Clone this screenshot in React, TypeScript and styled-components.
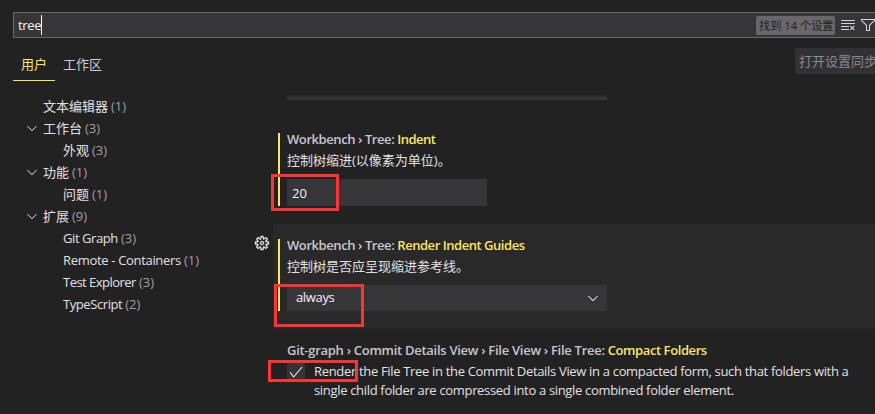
import React from 'react';
import styled, { createGlobalStyle } from 'styled-components';
import { VscCheck, VscChevronDown, VscClearAll, VscFilter, VscGear } from 'react-icons/vsc';

const accent = '#fce566';
const field = '#363537';
const fg = '#e2e0e4';

const GlobalStyle = createGlobalStyle`
  * { box-sizing: border-box; }
  html, body { margin: 0; background: #222222; overflow: hidden; }
  body {
    color: ${fg};
    font: 13px/22px "Open Sans", "Noto Sans CJK SC", sans-serif;
    white-space: nowrap;
  }
`;

const Editor = styled.main`
  width: 875px;
  height: 414px;
  padding: 12px 0 0 13px;
  overflow: hidden;
  background: #222222;
`;

const Text = styled.span<{ $track?: number }>`
  letter-spacing: ${(p) => p.$track ?? 0}px;
`;

const SearchBar = styled.div`
  display: flex;
  align-items: center;
  height: 26px;
  padding-left: 4px;
  background: ${field};
  border: 1px solid #69676c;
  border-right: 0;
  color: #f7f1ff;
`;

const Query = styled.div`
  flex: 1;
  display: flex;
  align-items: center;
`;

const Caret = styled.i`
  width: 1px;
  height: 20px;
  background: #ffffff;
`;

const ResultCount = styled.div`
  width: 79px;
  height: 19px;
  padding-left: 3px;
  border-radius: 2px;
  background: #69676c;
  color: #222222;
  font-size: 11.2px;
  line-height: 20px;
`;

const SearchActions = styled.div`
  display: flex;
  gap: 4px;
  width: 40px;
  padding-left: 5px;
  color: #d8d5dc;
`;

const SearchIcon = styled.span`
  display: flex;
  flex: none;
  width: 16px;
  font-size: 16px;
`;

const Header = styled.div`
  display: flex;
  justify-content: space-between;
  align-items: flex-start;
  height: 57px;
`;

const Tabs = styled.nav`
  display: flex;
  padding-top: 10px;
`;

const Tab = styled.div<{ $active?: boolean }>`
  height: 33px;
  padding: 5px 8px 0;
  color: ${(p) => (p.$active ? accent : '#cfccd4')};
  border-bottom: 1px solid ${(p) => (p.$active ? accent : 'transparent')};
`;

const SyncButton = styled.button`
  width: 80px;
  height: 26px;
  margin-top: 10px;
  padding: 0 0 0 4px;
  overflow: hidden;
  border: 0;
  border-radius: 2px 0 0 2px;
  background: #323134;
  color: #8b888f;
  font: inherit;
  text-align: left;
`;

const Columns = styled.div`
  display: flex;
`;

const Toc = styled.ul`
  flex: none;
  width: 235px;
  margin: 0;
  padding: 0;
  list-style: none;
`;

const TocRow = styled.li<{ $level: number }>`
  display: flex;
  align-items: center;
  height: 22px;
  padding-left: ${(p) => (p.$level === 1 ? 11 : 31)}px;
`;

const Twistie = styled.span`
  display: flex;
  width: 19px;
  font-size: 16px;
  color: #c5c2c8;
`;

const Count = styled.span`
  margin-left: 3px;
  color: #a19fa4;
  font-weight: 500;
`;

const Settings = styled.section`
  flex: 1;
  min-width: 0;
`;

const PreviousField = styled.div`
  width: 320px;
  height: 5px;
  margin: 0 0 18px 39px;
  background: linear-gradient(#29292b, ${field} 3px);
`;

const Setting = styled.article<{ $height: number; $focused?: boolean }>`
  display: grid;
  grid-template-columns: 25px 1fr;
  height: ${(p) => p.$height}px;
  background: ${(p) => (p.$focused ? 'linear-gradient(90deg, #222222 25px, #292929 25px)' : 'none')};
`;

const GearSlot = styled.div`
  display: flex;
  padding: 11px 0 0 6px;
  font-size: 16px;
  color: ${fg};

  svg {
    stroke: currentColor;
    stroke-width: 0.4px;
  }
`;

const SettingBody = styled.div<{ $modified?: boolean }>`
  align-self: start;
  margin: 15px 0 0 5px;
  padding-left: 7px;
  border-left: 2px solid ${(p) => (p.$modified ? accent : 'transparent')};
`;

const Title = styled.h3`
  margin: 0;
  height: 17px;
  font-size: 13px;
  line-height: 13px;
  font-weight: 600;
  color: #c9c5cf;
`;

const Name = styled(Text)`
  margin-left: 3px;
  color: ${accent};
`;

const Description = styled.p`
  margin: 0;
  height: 29px;
  line-height: 20px;
`;

const NumberInput = styled.div`
  width: 200px;
  height: 27px;
  padding-left: 5px;
  background: ${field};
  color: #f7f1ff;
  line-height: 29px;
`;

const Select = styled.div`
  display: flex;
  justify-content: space-between;
  width: 320px;
  height: 26px;
  padding: 0 6px 0 9px;
  background: ${field};
  color: #f7f1ff;
  line-height: 25px;
`;

const SelectArrow = styled.span`
  display: flex;
  align-items: center;
  font-size: 16px;
`;

const CheckRow = styled.div`
  display: flex;
  gap: 9px;
  padding-top: 1px;
  line-height: 19px;
  white-space: pre-line;
`;

const Checkbox = styled.span`
  display: flex;
  align-items: center;
  justify-content: center;
  width: 18px;
  height: 18px;
  margin-top: 1px;
  border-radius: 3px;
  background: ${field};
  color: #ffffff;
  font-size: 16px;
`;

const Marker = styled.div<{ $x: number; $y: number; $w: number; $h: number }>`
  position: absolute;
  left: ${(p) => p.$x}px;
  top: ${(p) => p.$y}px;
  width: ${(p) => p.$w}px;
  height: ${(p) => p.$h}px;
  border: 3px solid #fc3433;
  pointer-events: none;
`;

type Entry = { label: string; count: number; level: number; open?: boolean; track?: number };

const entries: Entry[] = [
  { label: '文本编辑器', count: 1, level: 1 },
  { label: '工作台', count: 3, level: 1, open: true },
  { label: '外观', count: 3, level: 2 },
  { label: '功能', count: 1, level: 1, open: true },
  { label: '问题', count: 1, level: 2 },
  { label: '扩展', count: 9, level: 1, open: true },
  { label: 'Git Graph', count: 3, level: 2, track: -0.42 },
  { label: 'Remote - Containers', count: 1, level: 2, track: -0.32 },
  { label: 'Test Explorer', count: 3, level: 2, track: -0.52 },
  { label: 'TypeScript', count: 2, level: 2, track: -0.42 },
];

function SettingTitle({ path, name, pathTrack, nameTrack }: { path: string; name: string; pathTrack: number; nameTrack: number }) {
  return (
    <Title>
      <Text $track={pathTrack}>{path}</Text>
      <Name $track={nameTrack}>{name}</Name>
    </Title>
  );
}

export default function App() {
  return (
    <Editor>
      <GlobalStyle />
      <SearchBar>
        <Query>
          <Text $track={-0.35}>tree</Text>
          <Caret />
        </Query>
        <ResultCount>找到 14 个设置</ResultCount>
        <SearchActions>
          <SearchIcon><VscClearAll /></SearchIcon>
          <SearchIcon><VscFilter /></SearchIcon>
        </SearchActions>
      </SearchBar>
      <Header>
        <Tabs>
          <Tab $active>用户</Tab>
          <Tab>工作区</Tab>
        </Tabs>
        <SyncButton>打开设置同步</SyncButton>
      </Header>
      <Columns>
        <Toc>
          {entries.map((e) => (
            <TocRow key={e.label} $level={e.level}>
              <Twistie>{e.open && <VscChevronDown />}</Twistie>
              <Text $track={e.track}>{e.label}</Text>
              <Count>({e.count})</Count>
            </TocRow>
          ))}
        </Toc>
        <Settings>
          <PreviousField />
          <Setting $height={106}>
            <GearSlot />
            <SettingBody $modified>
              <SettingTitle path="Workbench › Tree:" name="Indent" pathTrack={-0.42} nameTrack={-0.5} />
              <Description>控制树缩进(以像素为单位)。</Description>
              <NumberInput>20</NumberInput>
            </SettingBody>
          </Setting>
          <Setting $height={105} $focused>
            <GearSlot><VscGear /></GearSlot>
            <SettingBody $modified>
              <SettingTitle path="Workbench › Tree:" name="Render Indent Guides" pathTrack={-0.42} nameTrack={-0.46} />
              <Description>控制树是否应呈现缩进参考线。</Description>
              <Select>
                <Text $track={-0.35}>always</Text>
                <SelectArrow><VscChevronDown /></SelectArrow>
              </Select>
            </SettingBody>
          </Setting>
          <Setting $height={85}>
            <GearSlot />
            <SettingBody>
              <SettingTitle
                path="Git-graph › Commit Details View › File View › File Tree:"
                name="Compact Folders"
                pathTrack={-0.28}
                nameTrack={-0.41}
              />
              <CheckRow>
                <Checkbox><VscCheck /></Checkbox>
                <Text $track={-0.325}>
                  {'Render the File Tree in the Commit Details View in a compacted form, such that folders with a\nsingle child folder are compressed into a single combined folder element.'}
                </Text>
              </CheckRow>
            </SettingBody>
          </Setting>
        </Settings>
      </Columns>
      <Marker $x={271} $y={174} $w={68} $h={37} />
      <Marker $x={274} $y={284} $w={90} $h={43} />
      <Marker $x={268} $y={360} $w={90} $h={22} />
    </Editor>
  );
}
